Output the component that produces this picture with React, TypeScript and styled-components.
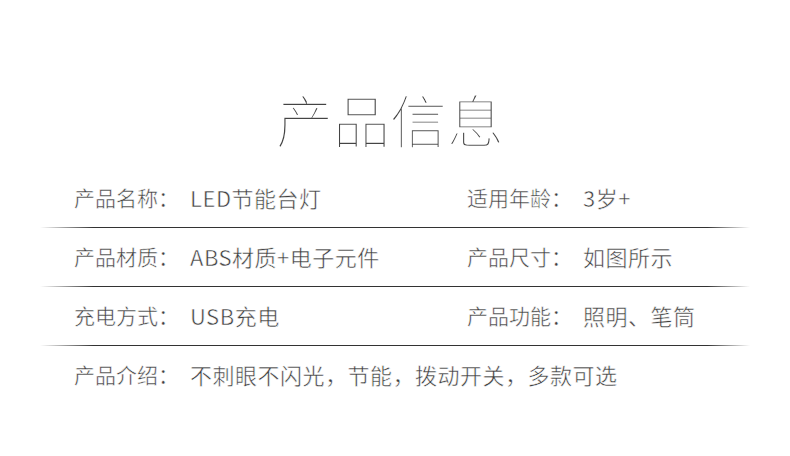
import React from "react";
import styled, { createGlobalStyle } from "styled-components";

const Global = createGlobalStyle`
  html, body { margin: 0; padding: 0; background: #fff; }
  body { font-family: "Noto Sans CJK SC", "Noto Sans", sans-serif; color: #444; }
`;

const Page = styled.div`
  width: 790px;
  height: 456px;
  box-sizing: border-box;
  padding-top: 89px;
  display: flex;
  flex-direction: column;
`;

const Title = styled.h1`
  margin: 0;
  height: 58px;
  line-height: 58px;
  font-size: 57px;
  font-weight: 300;
  text-align: center;
  color: #444;
  padding-right: 10px;
  -webkit-text-stroke: 1.6px #fff;
`;

const Table = styled.div`
  margin-top: 22px;
  display: flex;
  flex-direction: column;
`;

const Row = styled.div<{ $single?: boolean }>`
  height: 58px;
  box-sizing: border-box;
  padding: 0 0 3px 74px;
  display: grid;
  grid-template-columns: ${(p) => (p.$single ? "1fr" : "393px 1fr")};
  align-items: center;
  line-height: 22px;
`;

const Cell = styled.div`
  display: flex;
  align-items: center;
  white-space: nowrap;
  -webkit-text-stroke: 0.5px #fff;
`;

const Label = styled.span`
  width: 116px;
  flex: none;
  font-size: 21px;
  color: #3f3f3f;
`;

const Value = styled.span`
  font-size: 22px;
  letter-spacing: 0.5px;
  color: #3f3f3f;
`;

const Divider = styled.div`
  height: 1px;
  margin: 0 40px;
  background: linear-gradient(
    to right,
    rgba(51, 51, 51, 0) 0%,
    #333 7.5%,
    #333 94%,
    rgba(51, 51, 51, 0) 100%
  );
`;

type Item = { label: string; value: string };

const rows: Item[][] = [
  [
    { label: "产品名称：", value: "LED节能台灯" },
    { label: "适用年龄：", value: "3岁+" },
  ],
  [
    { label: "产品材质：", value: "ABS材质+电子元件" },
    { label: "产品尺寸：", value: "如图所示" },
  ],
  [
    { label: "充电方式：", value: "USB充电" },
    { label: "产品功能：", value: "照明、笔筒" },
  ],
  [{ label: "产品介绍：", value: "不刺眼不闪光，节能，拨动开关，多款可选" }],
];

export default function App() {
  return (
    <>
      <Global />
      <Page>
        <Title>产品信息</Title>
        <Table>
          {rows.map((r, i) => (
            <React.Fragment key={i}>
              <Row $single={r.length === 1}>
                {r.map((c) => (
                  <Cell key={c.label}>
                    <Label>{c.label}</Label>
                    <Value>{c.value}</Value>
                  </Cell>
                ))}
              </Row>
              {i < rows.length - 1 && <Divider />}
            </React.Fragment>
          ))}
        </Table>
      </Page>
    </>
  );
}
